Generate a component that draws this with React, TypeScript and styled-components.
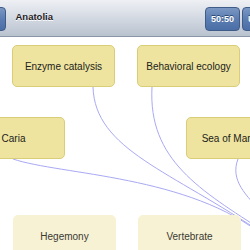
import React from "react";
import styled, { createGlobalStyle } from "styled-components";

const GlobalStyle = createGlobalStyle`
  html, body { margin: 0; padding: 0; background: #ffffff; }
  body { font-family: "Liberation Sans", Arial, sans-serif; overflow: hidden; }
`;

const Screen = styled.div`
  width: 250px;
  height: 250px;
  display: flex;
  flex-direction: column;
  overflow: hidden;
  background: #ffffff;
`;

const NavBar = styled.div`
  height: 36px;
  flex: 0 0 36px;
  display: flex;
  align-items: center;
  background: linear-gradient(#eef0f4 0%, #d3d9e2 50%, #b8c2cf 100%);
  border-bottom: 1px solid #8b96a6;
`;

const BarButton = styled.div<{ $cut?: number }>`
  height: 24px;
  margin-top: 2px;
  display: flex;
  align-items: center;
  justify-content: center;
  box-sizing: border-box;
  padding: 0 5px;
  margin-left: ${(p) => (p.$cut ? `-${p.$cut}px` : "0")};
  border: 1px solid #3f5b88;
  border-radius: 4px;
  background: linear-gradient(#7b97c3 0%, #5b7db2 50%, #4a6ea6 100%);
  color: #ffffff;
  font-size: 9px;
  font-weight: bold;
  text-shadow: 0 -1px 0 #2f4a75;
  white-space: nowrap;
  flex: 0 0 auto;
`;

const Title = styled.div`
  margin-left: 10px;
  margin-top: -3px;
  font-size: 9.5px;
  font-weight: bold;
  color: #1e2023;
  text-shadow: 0 1px 0 #ffffff;
  flex: 1;
`;

const RightButtons = styled.div`
  display: flex;
  gap: 2px;
  margin-right: -27px;
`;

const Canvas = styled.div`
  position: relative;
  flex: 1;
`;

const Lines = styled.svg`
  position: absolute;
  left: 0;
  top: 0;
  width: 250px;
  height: 213px;
  overflow: visible;
`;

const Node = styled.div<{ $faded?: boolean }>`
  position: absolute;
  width: 103px;
  height: 42px;
  box-sizing: border-box;
  display: flex;
  align-items: center;
  justify-content: center;
  border-radius: 5px;
  font-size: 10px;
  white-space: nowrap;
  color: ${(p) => (p.$faded ? "#3a3a34" : "#222219")};
  background: ${(p) => (p.$faded ? "#f7f2d3" : "#eee4a0")};
  border: 1.5px solid ${(p) => (p.$faded ? "#f7f2d3" : "#d9cd78")};
`;

type NodeData = { label: string; x: number; y: number; faded?: boolean };

const nodes: NodeData[] = [
  { label: "Enzyme catalysis", x: 12, y: 8 },
  { label: "Behavioral ecology", x: 137, y: 8 },
  { label: "Caria", x: -38, y: 80 },
  { label: "Sea of Marmara", x: 186, y: 80 },
  { label: "Hegemony", x: 13, y: 178, faded: true },
  { label: "Vertebrate", x: 138, y: 178, faded: true },
];

const paths = [
  "M93,50 C95,113 170,133 265,198",
  "M152,50 C148,123 200,153 265,195",
  "M13,122 C60,138 190,138 265,200",
  "M238,122 C230,143 245,158 265,178",
];

export default function App() {
  return (
    <>
      <GlobalStyle />
      <Screen>
        <NavBar>
          <BarButton $cut={29}>Done</BarButton>
          <Title>Anatolia</Title>
          <RightButtons>
            <BarButton>50:50</BarButton>
            <BarButton>Undo</BarButton>
          </RightButtons>
        </NavBar>
        <Canvas>
          <Lines viewBox="0 0 250 213">
            {paths.map((d, i) => (
              <path key={i} d={d} fill="none" stroke="#a9a9f4" strokeWidth={1} />
            ))}
          </Lines>
          {nodes.map((n) => (
            <Node key={n.label} $faded={n.faded} style={{ left: n.x, top: n.y }}>
              {n.label}
            </Node>
          ))}
        </Canvas>
      </Screen>
    </>
  );
}
